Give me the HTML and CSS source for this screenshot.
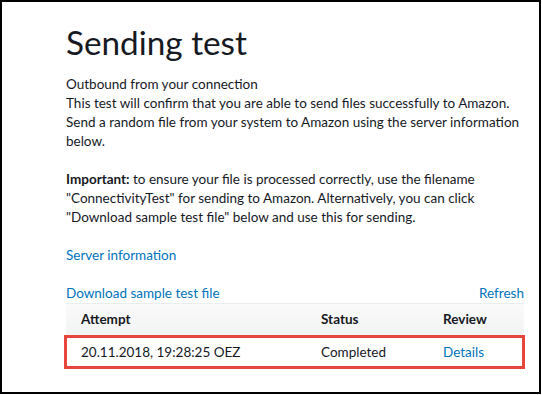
FILE: index.html
```html
<!DOCTYPE html>
<html lang="en">
<head>
    <meta charset="UTF-8">
    <meta name="viewport" content="width=device-width, initial-scale=1.0">
    <title>Sending test</title>
    <link rel="stylesheet" href="styles.css">
</head>
<body>
    <div class="page">
        <main class="content">
            <h1 class="title">Sending test</h1>
            <p>Outbound from your connection<br>
                This test will confirm that you are able to send files successfully to Amazon.<br>
                Send a random file from your system to Amazon using the server information below.</p>
            <p><strong>Important:</strong> to ensure your file is processed correctly, use the filename
                "ConnectivityTest" for sending to Amazon. Alternatively, you can click
                "Download sample test file" below and use this for sending.</p>
            <p><a href="#">Server information</a></p>
            <div class="table-bar">
                <a href="#">Download sample test file</a>
                <a href="#">Refresh</a>
            </div>
            <div class="attempts">
                <div class="attempts-head">
                    <span>Attempt</span>
                    <span>Status</span>
                    <span>Review</span>
                </div>
                <div class="attempts-row highlight">
                    <span>20.11.2018, 19:28:25 OEZ</span>
                    <span>Completed</span>
                    <span><a href="#">Details</a></span>
                </div>
            </div>
        </main>
    </div>
</body>
</html>
```

FILE: styles.css
```css
:root {
    --text: #16191f;
    --link: #0073bb;
    --mark: #e8453c;
}

* {
    box-sizing: border-box;
    margin: 0;
    padding: 0;
}

body {
    font-family: 'Lato', 'Open Sans', sans-serif;
    font-size: 13.5px;
    line-height: 19px;
    color: var(--text);
    background: #fff;
}

.page {
    width: 541px;
    height: 394px;
    border: 2px solid #000;
    overflow: hidden;
}

.content {
    width: 458px;
    margin-left: 64px;
    padding-top: 18px;
}

.title {
    font-size: 33.3px;
    font-weight: 400;
    line-height: 44px;
    margin-bottom: 11px;
}

p {
    margin-bottom: 19px;
}

a {
    color: var(--link);
    text-decoration: none;
}

.table-bar {
    display: flex;
    justify-content: space-between;
}

.attempts-head,
.attempts-row {
    display: grid;
    grid-template-columns: 240px 122px 1fr;
    align-items: center;
}

.attempts-head {
    height: 32px;
    padding-left: 15px;
    font-weight: 700;
    border-top: 1px solid #eaeded;
    background: linear-gradient(#fafafa, #f2f3f3);
}

.attempts-row {
    height: 34px;
    padding-left: 14px;
    margin: 0 -1px 0 -2px;
    border: 3px solid var(--mark);
}
```
